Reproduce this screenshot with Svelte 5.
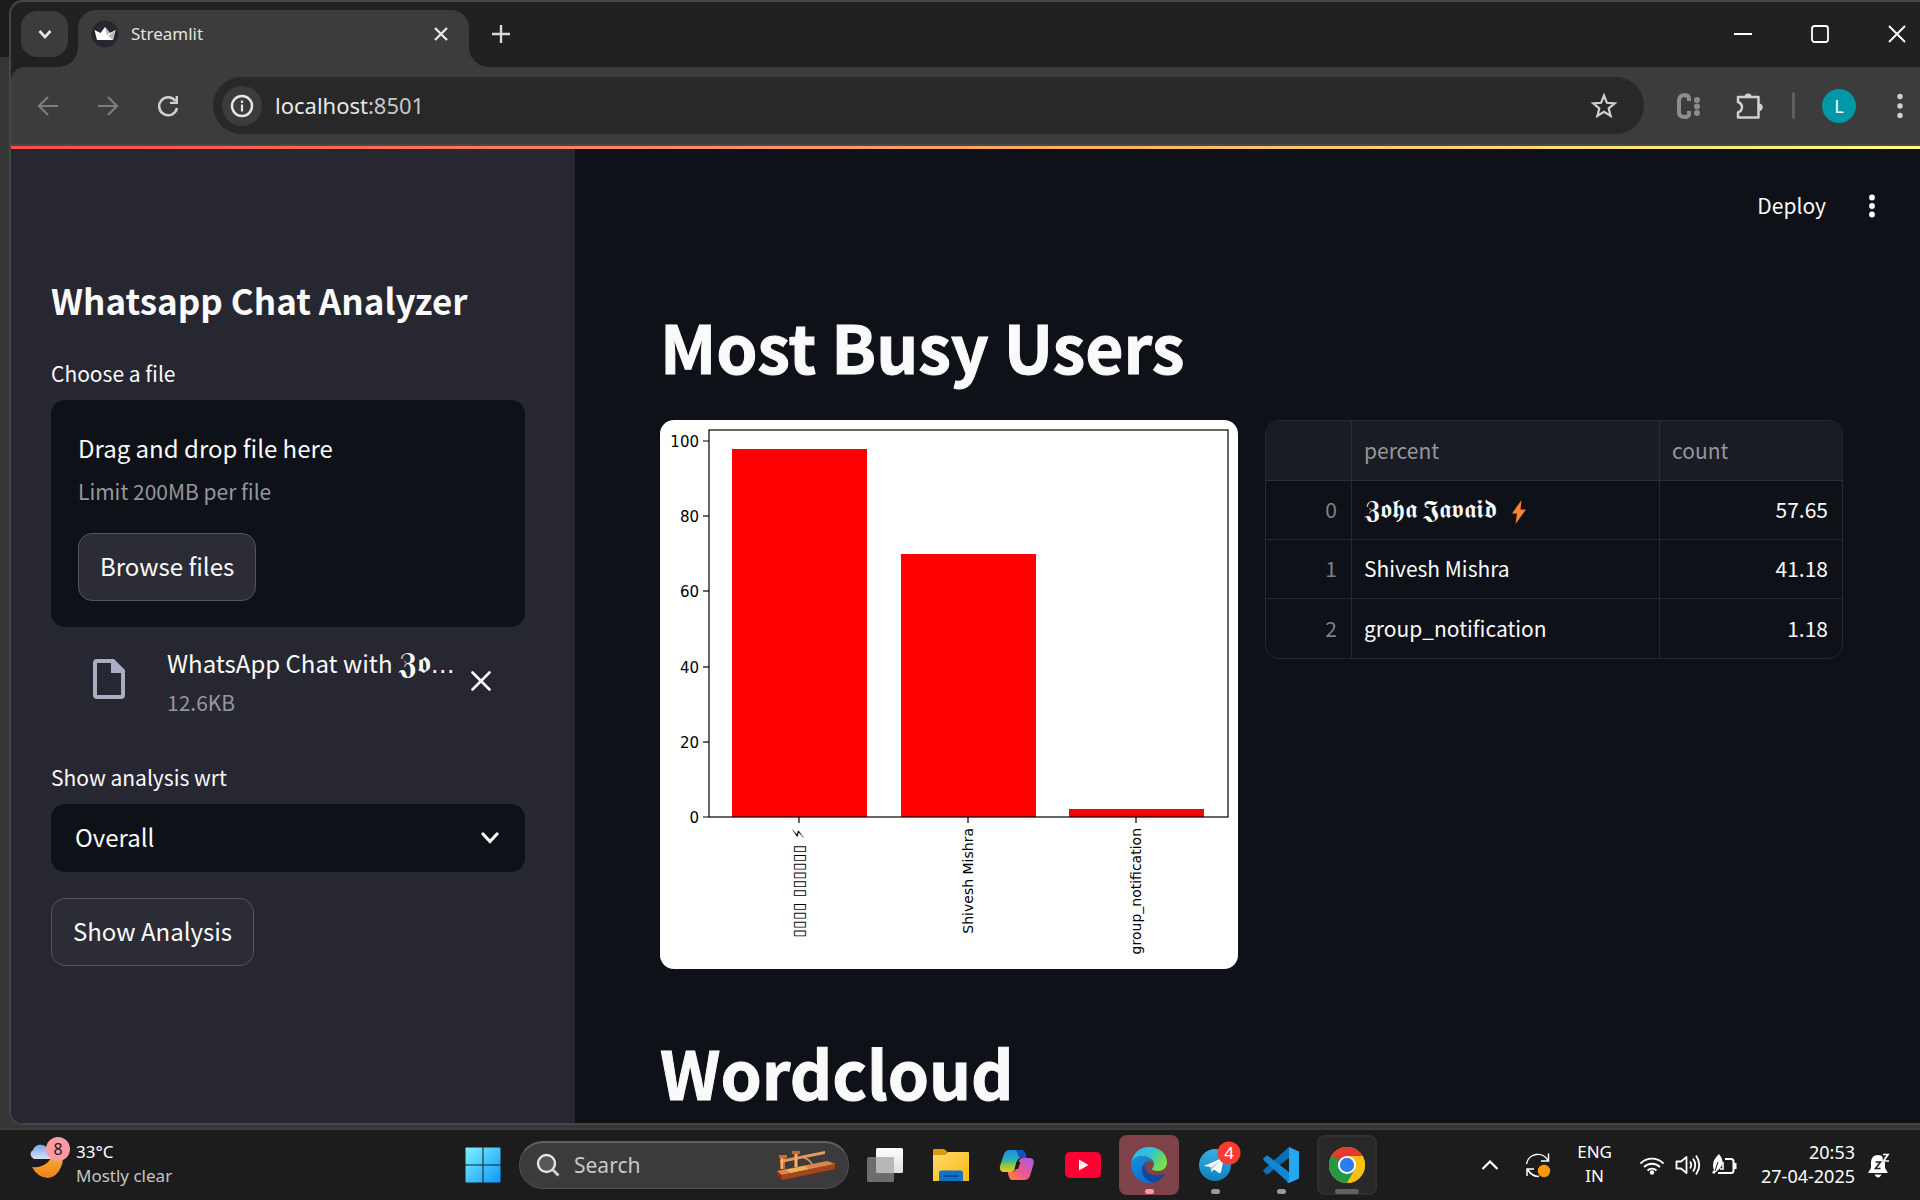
<script>
  const yTicks = [100, 80, 60, 40, 20, 0];
  const bars = [
    { label: '▯▯▯▯ ▯▯▯▯▯▯ ⚡', value: 98 },
    { label: 'Shivesh Mishra', value: 70 },
    { label: 'group_notification', value: 2 }
  ];
  const rows = [
    { name: '𝖅𝖔𝖍𝖆 𝕵𝖆𝖛𝖆𝖎𝖉', bolt: true, count: '57.65' },
    { name: 'Shivesh Mishra', bolt: false, count: '41.18' },
    { name: 'group_notification', bolt: false, count: '1.18' }
  ];
  const plot = { left: 49, right: 568, top: 10, bottom: 397 };
  const unit = 3.76;
  const y = (v) => Math.round(plot.bottom - v * unit);
  const centre = (i) => Math.round(139 + i * 168.5);
  let user = $state('Overall');
</script>

<div class="desktop">
  <div class="window">
    <div class="tabstrip">
      <button class="tabsearch" aria-label="Search tabs">
        <svg width="16" height="16" viewBox="0 0 16 16"><path d="M2.500 5l5.500 6 5.500-6" fill="none" stroke="#e6e6e6" stroke-width="2.600" /></svg>
      </button>
      <div class="tab">
        <svg width="28" height="28" viewBox="0 0 28 28">
          <circle cx="14" cy="14" r="13.500" fill="#262730" />
          <path d="M3.500 10l6 3L14 7l5 6 5.500-3-2.500 10H6z" fill="#fff" />
          <path d="M14 7l5 6-3 2zM24.500 10L22 20l-5-4z" fill="#b9b9bd" />
        </svg>
        <span class="tabtitle">Streamlit</span>
        <button class="plain" aria-label="Close tab">
          <svg width="16" height="16" viewBox="0 0 16 16"><path d="M2 2l12 12M14 2L2 14" stroke="#e6e6e6" stroke-width="2.400" /></svg>
        </button>
      </div>
      <button class="plain newtab" aria-label="New tab">
        <svg width="18" height="18" viewBox="0 0 18 18"><path d="M9 0v18M0 9h18" stroke="#dadada" stroke-width="2.400" /></svg>
      </button>
      <div class="winctl">
        <button class="plain" aria-label="Minimize"><svg width="18" height="18" viewBox="0 0 18 18"><path d="M0 9h18" stroke="#fff" stroke-width="2" /></svg></button>
        <button class="plain" aria-label="Maximize"><svg width="18" height="18" viewBox="0 0 18 18"><rect x="1" y="1" width="16" height="16" rx="2.500" fill="none" stroke="#fff" stroke-width="1.800" /></svg></button>
        <button class="plain" aria-label="Close"><svg width="18" height="18" viewBox="0 0 18 18"><path d="M1 1l16 16M17 1L1 17" stroke="#fff" stroke-width="1.900" /></svg></button>
      </div>
    </div>

    <div class="toolbar">
      <div class="nav">
        <button class="plain" aria-label="Back"><svg width="22" height="22" viewBox="0 0 22 22"><path d="M21 11H2M11 2l-9 9 9 9" fill="none" stroke="#7c7c7c" stroke-width="2.200" /></svg></button>
        <button class="plain" aria-label="Forward"><svg width="22" height="22" viewBox="0 0 22 22"><path d="M1 11h19M11 2l9 9-9 9" fill="none" stroke="#7c7c7c" stroke-width="2.200" /></svg></button>
        <button class="plain" aria-label="Reload"><svg width="22" height="22" viewBox="0 0 22 22"><path d="M18.500 6A9 9 0 1 0 20 13" fill="none" stroke="#d0d0d0" stroke-width="2.500" /><path d="M21 1v8h-8V6.700h5.600V1z" fill="#d0d0d0" /></svg></button>
      </div>
      <div class="omnibox">
        <button class="info" aria-label="Site information">
          <svg width="24" height="24" viewBox="0 0 24 24"><circle cx="12" cy="12" r="10" fill="none" stroke="#e6e6e6" stroke-width="2.400" /><path d="M12 10.500V17.500M12 6.500V9" stroke="#e6e6e6" stroke-width="2.200" /></svg>
        </button>
        <a class="url" href="http://localhost:8501">localhost<span>:8501</span></a>
        <button class="plain" aria-label="Bookmark this tab">
          <svg width="28" height="28" viewBox="0 0 28 28"><path d="M14 3.500l2.900 7.300 7.800.6-6 5 1.900 7.600L14 19.900 7.400 24l1.900-7.600-6-5 7.800-.6z" fill="none" stroke="#d0d0d0" stroke-width="2.200" /></svg>
        </button>
      </div>
      <div class="ext">
        <button class="plain" aria-label="Extension">
          <svg width="26" height="28" viewBox="0 0 26 28"><path d="M14 9V7q0-4-4.500-4T4 8v12q0 5 5.500 5t4.500-4v-2" fill="none" stroke="#8d8d8d" stroke-width="4" /><g fill="#8d8d8d"><circle cx="22" cy="8" r="3" /><circle cx="22" cy="14.500" r="3" /><circle cx="22" cy="21" r="3" /></g></svg>
        </button>
        <button class="plain" aria-label="Extensions">
          <svg width="30" height="30" viewBox="0 0 30 30"><path d="M3 6h20.500v20.500H3v-5q4-1.500 4-5.200T3 11z" fill="none" stroke="#d0d0d0" stroke-width="2.500" stroke-linejoin="round" /><path d="M9.500 6a3.600 3.600 0 0 1 7.200 0zM24 12.500a3.600 3.600 0 0 1 0 7.400z" fill="#d0d0d0" /></svg>
        </button>
        <span class="divider"></span>
        <button class="avatar">L</button>
        <button class="plain" aria-label="Menu"><svg width="6" height="26" viewBox="0 0 6 26"><g fill="#d0d0d0"><circle cx="3" cy="3.500" r="2.700" /><circle cx="3" cy="13" r="2.700" /><circle cx="3" cy="22.500" r="2.700" /></g></svg></button>
      </div>
    </div>
    <div class="rainbow"></div>

    <div class="app">
      <aside class="sidebar">
        <h2>Whatsapp Chat Analyzer</h2>
        <div class="label" id="upload-label">Choose a file</div>
        <section class="dropzone" aria-labelledby="upload-label">
          <div class="body">Drag and drop file here</div>
          <div class="small muted limit">Limit 200MB per file</div>
          <button class="btn">Browse files</button>
        </section>
        <div class="file">
          <svg width="32" height="40" viewBox="0 0 32 40"><path d="M4 0h17l11 11v25a4 4 0 0 1-4 4H4a4 4 0 0 1-4-4V4a4 4 0 0 1 4-4zm0 4v32h24V14H18V4z" fill="#a9aec4" /></svg>
          <div class="filetext">
            <div class="body">WhatsApp Chat with <span class="fraktur">𝖅𝖔</span><span class="dots">…</span></div>
            <div class="small muted">12.6KB</div>
          </div>
          <button class="plain" aria-label="Remove file"><svg width="20" height="20" viewBox="0 0 20 20"><path d="M1.500 1.500l17 17M18.500 1.500l-17 17" stroke="#fafafa" stroke-width="2.600" stroke-linecap="round" /></svg></button>
        </div>
        <label class="label" for="user">Show analysis wrt</label>
        <div class="selectbox">
          <select id="user" bind:value={user}>
            <option>Overall</option>
            <option>Shivesh Mishra</option>
            <option>group_notification</option>
          </select>
          <svg width="18" height="12" viewBox="0 0 18 12"><path d="M2 2l7 7.500L16 2" fill="none" stroke="#fafafa" stroke-width="3.200" stroke-linecap="round" /></svg>
        </div>
        <button class="btn">Show Analysis</button>
      </aside>

      <main>
        <header>
          <button class="plain deploy">Deploy</button>
          <button class="plain" aria-label="App menu"><svg width="6" height="24" viewBox="0 0 6 24"><g fill="#fff"><circle cx="3" cy="3.500" r="2.900" /><circle cx="3" cy="12" r="2.900" /><circle cx="3" cy="20.500" r="2.900" /></g></svg></button>
        </header>
        <h1>Most Busy Users</h1>
        <div class="columns">
          <svg class="chart" viewBox="0 0 578 549" role="img" aria-label="Bar chart of messages per user">
            {#each bars as bar, i}
              <rect x={centre(i) - 67} y={y(bar.value)} width="135" height={plot.bottom - y(bar.value)} fill="#f00" />
              <path d="M{centre(i)} {plot.bottom}v6" />
              <text class={i === 0 ? 'xlabel tofu' : 'xlabel'} transform="translate({centre(i) + 5} {plot.bottom + 11}) rotate(-90)" text-anchor="end">{bar.label}</text>
            {/each}
            {#each yTicks as tick}
              <path d="M{plot.left} {y(tick)}h-6" />
              <text x={plot.left - 10} y={y(tick) + 6} text-anchor="end">{tick}</text>
            {/each}
            <rect x={plot.left} y={plot.top} width={plot.right - plot.left} height={plot.bottom - plot.top} fill="none" stroke="#000" stroke-width="1.200" />
          </svg>
          <div class="tablewrap">
            <table>
              <colgroup><col class="c-index" /><col /><col class="c-count" /></colgroup>
              <thead>
                <tr><th aria-label="Index"></th><th>percent</th><th>count</th></tr>
              </thead>
              <tbody>
                {#each rows as row, i}
                  <tr>
                    <td class="index">{i}</td>
                    <td>
                      {#if row.bolt}
                        <span class="fraktur">{row.name}</span>
                        <svg class="bolt" width="14" height="24" viewBox="0 0 14 24"><path d="M9.500 0L0 13.500h5L3.500 24 14 9.500H8.500z" fill="#ff822d" /></svg>
                      {:else}{row.name}{/if}
                    </td>
                    <td class="num">{row.count}</td>
                  </tr>
                {/each}
              </tbody>
            </table>
          </div>
        </div>
        <h1 class="next">Wordcloud</h1>
      </main>
    </div>
  </div>

  <div class="taskbar">
    <button class="weather">
      <svg width="44" height="58" viewBox="0 0 44 58">
        <defs>
          <linearGradient id="moon" x1="0" y1="0" x2="0" y2="1"><stop offset="0" stop-color="#f5c033" /><stop offset="1" stop-color="#f0801e" /></linearGradient>
          <linearGradient id="cloud" x1="0" y1="0" x2="0" y2="1"><stop offset="0" stop-color="#7aa5ee" /><stop offset="1" stop-color="#d5e1f8" /></linearGradient>
        </defs>
        <path d="M32 14q5 9 1 17-4 10-13 11-10 0-16-11 9 1 15-4t6-14z" fill="url(#moon)" />
        <path d="M6 23a5 5 0 0 1-1-9 8 8 0 0 1 14-2 6 6 0 0 1 4 11z" fill="url(#cloud)" />
        <circle cx="30" cy="13" r="12" fill="#ff99a4" />
        <text x="30" y="19" text-anchor="middle" class="badge8">8</text>
      </svg>
      <span class="wtext"><span>33°C</span><span class="dim">Mostly clear</span></span>
    </button>

    <div class="pins">
      <button class="pin" aria-label="Start">
        <svg width="36" height="36" viewBox="0 0 36 36">
          <defs><linearGradient id="win" x1="0" y1="0" x2="1" y2="1"><stop offset="0" stop-color="#7df4fd" /><stop offset="1" stop-color="#0c96fb" /></linearGradient></defs>
          <path d="M1 .5h16.500v17H.5V1zM18.500.5H35l.5.5v16.500h-17zM.5 18.500h17v17H1l-.5-.5zM18.500 18.500h17V35l-.5.5H18.500z" fill="url(#win)" />
        </svg>
      </button>
      <label class="search">
        <svg width="24" height="24" viewBox="0 0 24 24"><circle cx="10.500" cy="10.500" r="8.500" fill="#575757" stroke="#e4e6e8" stroke-width="2.400" /><path d="M16.500 16.500l6 6" stroke="#cfd4d8" stroke-width="2.800" /></svg>
        <input type="text" placeholder="Search" aria-label="Search" />
        <svg width="60" height="32" viewBox="0 0 60 32">
          <path d="M1 22l53-10 5 2v6L6 31l-5-5z" fill="#8f3413" />
          <path d="M1 22l50-10 8 3L6 26z" fill="#d9874f" />
          <path d="M10 21l18-4 5 3-18 4z" fill="#e6b655" />
          <path d="M6 31v-5l53-11v5z" fill="#a4451a" />
          <path d="M3 6h8v3H9v11H4V9H3zM16 2h8v3h-2v13h-4V5h-2z" fill="#c96b30" />
          <path d="M4 11l45-9v3L24 10l-20 4z" fill="#e39a5e" />
          <path d="M28 9q5 1 8 6" fill="none" stroke="#d99a63" stroke-width="1.500" />
          <path d="M19 5h2v13h-2zM5 9h2v11H5z" fill="#efb27b" />
        </svg>
      </label>
      <button class="pin" aria-label="Task view">
        <svg width="36" height="34" viewBox="0 0 36 34"><defs><linearGradient id="tv" x1="0" y1="0" x2="0" y2="1"><stop offset="0" stop-color="#fff" /><stop offset="1" stop-color="#dedede" /></linearGradient></defs><rect x="9" y="0" width="27" height="25" rx="1.500" fill="url(#tv)" /><rect x="0" y="9" width="27" height="25" rx="1.500" fill="#6d6d6d" /><path d="M9 9h18v16H10.500A1.500 1.500 0 0 1 9 23.500z" fill="#b7b7b7" /></svg>
      </button>
      <button class="pin" aria-label="File Explorer">
        <svg width="36" height="34" viewBox="0 0 36 34"><defs><linearGradient id="fol" x1="0" y1="0" x2="1" y2="1"><stop offset="0" stop-color="#ffdb70" /><stop offset="1" stop-color="#fbb90d" /></linearGradient></defs><path d="M0 2q0-1 1-1h9q2 0 3 1.500L15 5v4H0z" fill="#dd9a08" /><path d="M0 7h11q2 0 3-1.500L15 4h20q1 0 1 1v28H0z" fill="url(#fol)" /><path d="M6 33V25q0-2.500 2.500-2.500h19Q30 22.500 30 25v8z" fill="#1173c7" /><path d="M10.500 28h15" stroke="#0a4a8a" stroke-width="1.800" /></svg>
      </button>
      <button class="pin" aria-label="Copilot">
        <svg width="36" height="34" viewBox="0 0 36 34">
          <defs>
            <linearGradient id="cpa" x1="0" y1="0" x2="0" y2="1"><stop offset="0" stop-color="#1a8fe8" /><stop offset=".45" stop-color="#2bb0b5" /><stop offset=".7" stop-color="#92c83e" /><stop offset="1" stop-color="#f2c71c" /></linearGradient>
            <linearGradient id="cpb" x1="0" y1="1" x2="1" y2="0"><stop offset="0" stop-color="#ff8a4a" /><stop offset=".45" stop-color="#f0568c" /><stop offset="1" stop-color="#a45bf0" /></linearGradient>
          </defs>
          <path d="M11 2h11q3 0 4 3l1.500 5H22q-3 0-4 3l-2 8q-1 3-4 3H5q-5 0-4-6L5 6q1.500-4 6-4z" fill="url(#cpa)" />
          <path d="M17 2h5q3 0 4 3l1.500 5H22q-3-1-3-4z" fill="#1251c4" />
          <path d="M25 32H14q-3 0-4-3l-1-5h4q3 0 4-3l3-8q1-3 4-3h6q6 0 4.500 6L31 28q-1.500 4-6 4z" fill="url(#cpb)" />
          <path d="M19 32h-5q-3 0-4-3l-1-5h4q3 1 4 4z" fill="#ff7553" />
          <path d="M17.500 14h4l-2.500 7h-3.500z" fill="#1c1c1c" />
        </svg>
      </button>
      <button class="pin" aria-label="YouTube">
        <svg width="36" height="26" viewBox="0 0 36 26"><rect width="36" height="26" rx="5" fill="#ff0033" /><path d="M14 7.500v11L23.500 13z" fill="#fff" /></svg>
      </button>
      <button class="pin alert" aria-label="Edge">
        <svg width="36" height="36" viewBox="0 0 36 36">
          <defs>
            <linearGradient id="eda" x1="0" y1="0" x2="1" y2=".5"><stop offset="0" stop-color="#36b8f2" /><stop offset=".5" stop-color="#2dc3d8" /><stop offset="1" stop-color="#74e04a" /></linearGradient>
            <linearGradient id="edb" x1="0" y1="0" x2=".5" y2="1"><stop offset="0" stop-color="#1490d8" /><stop offset="1" stop-color="#0a70d4" /></linearGradient>
          </defs>
          <path d="M0 17C1 7 8 0 18 0c11 0 18 7 18 15 0 6-4 9-9 9-4 0-6-1-6-2s2-2 2-5c0-4-5-8-12-8C5 9 1 13 0 17z" fill="url(#eda)" />
          <path d="M0 18c0-6 5-9 11-9s11 4 11 7c0 0-1-2-4-2-4 0-7 4-7 9 0 7 6 12 12 12q-2 1-5 1C8 36 0 28 0 18z" fill="url(#edb)" />
          <path d="M14 16q-3 3-3 7c0 7 6 12 11 12.500C27 35 31 32 33.500 28c.5-1-.5-1.500-1.500-1-6 3-16 1-18-6q-.5-3 0-5z" fill="#114a9c" />
        </svg>
        <span class="mark"></span>
      </button>
      <button class="pin" aria-label="Telegram">
        <svg width="52" height="56" viewBox="-2 -6 52 56">
          <defs><linearGradient id="tg" x1="0" y1="0" x2="0" y2="1"><stop offset="0" stop-color="#38aee4" /><stop offset="1" stop-color="#0f80bf" /></linearGradient></defs>
          <circle cx="24" cy="22" r="16" fill="url(#tg)" />
          <path d="M13 23l18-8q2-1 1.500 1.500L30 29q-.5 2-2 1l-5-3.500-2.500 2.500-1-5z" fill="#fff" /><path d="M19.500 24.500l9-6-7 7-1 3.500z" fill="#a9cbe0" />
          <circle cx="38" cy="10" r="11.500" fill="#f73c30" />
          <text x="38" y="16" text-anchor="middle" class="badge4">4</text>
        </svg>
        <span class="mark"></span>
      </button>
      <button class="pin" aria-label="Visual Studio Code">
        <svg width="36" height="36" viewBox="0 0 36 36"><path d="M26 0v11L5 27q-1 .8-2 0L.7 24.700q-1-1 0-2z" fill="#0b6fb5" /><path d="M26 36V25L5 9q-1-.8-2 0L.7 11.300q-1 1 0 2z" fill="#1186d2" /><path d="M26 0l10 4.500v27L26 36q-1.500 0-2-1.500L26 34z" fill="#27a7f2" /></svg>
        <span class="mark"></span>
      </button>
      <button class="pin active" aria-label="Chrome">
        <svg width="36" height="36" viewBox="0 0 36 36"><circle cx="18" cy="18" r="18" fill="#fbbf12" /><path d="M2.400 9A18 18 0 0 1 33.600 9H18L10 22.500z" fill="#e33b2e" /><path d="M2.400 9A18 18 0 0 0 18 36l8-13.500-16 0z" fill="#269547" /><path d="M2.400 9L10.200 22.500 14 14z" fill="#269547" /><path d="M18 9h15.600A18 18 0 0 1 18 36l7.800-13.500z" fill="#fbbf12" /><circle cx="18" cy="18" r="9" fill="#fff" /><circle cx="18" cy="18" r="7.200" fill="#2f7cf0" /></svg>
        <span class="mark"></span>
      </button>
    </div>

    <div class="tray">
      <button class="plain" aria-label="Show hidden icons"><svg width="18" height="12" viewBox="0 0 18 12"><path d="M1.500 10L9 2.500l7.500 7.500" fill="none" stroke="#fff" stroke-width="2.200" /></svg></button>
      <button class="plain sync" aria-label="Updates"><svg width="26" height="26" viewBox="0 0 26 26"><path d="M1.500 12A11.500 11.500 0 0 1 23 8.500M23.500 1.500V9H16M9 17H2v7M3 18q4 6.500 11 6.500" fill="none" stroke="#fff" stroke-width="1.500" /><circle cx="19" cy="19" r="6.200" fill="#ff9808" /></svg></button>
      <button class="plain lang"><span>ENG</span><span>IN</span></button>
      <button class="plain status" aria-label="Network, volume and battery">
        <svg width="26" height="20" viewBox="0 0 26 20"><g fill="none" stroke="#fff" stroke-width="1.900"><path d="M1.500 8.500a16 16 0 0 1 23 0M5 12a11.300 11.300 0 0 1 16 0M8.500 15.500a6.400 6.400 0 0 1 9 0" /></g><circle cx="13" cy="17.500" r="2.200" fill="#fff" /></svg>
        <svg width="26" height="22" viewBox="0 0 26 22"><g fill="none" stroke="#fff" stroke-width="1.800"><path d="M1.500 7.500H6L11.500 3v16L6 14.500H1.500z" stroke-linejoin="round" /><path d="M15 7.500q2.500 3.500 0 7M18 4.500q4.500 6.500 0 13M21 1.500q6.500 9.500 0 19" /></g></svg>
        <svg width="26" height="22" viewBox="0 0 26 22"><path d="M14 5h6q2.500 0 2.500 2.500v9Q22.500 19 20 19H7" fill="none" stroke="#fff" stroke-width="2" /><path d="M23 9h2.500v6H23zM8 0q4 5 3.500 9T7 16l-4 4-2-1.500L3 16Q-.5 8 8 0z" fill="#fff" /><path d="M7 8L4 17" stroke="#1c1c1c" /><path d="M12 8v7H9" fill="none" stroke="#fff" stroke-width="1.600" /></svg>
      </button>
      <button class="plain clock"><span>20:53</span><span>27-04-2025</span></button>
      <button class="plain" aria-label="Notifications"><svg width="22" height="26" viewBox="0 0 22 26"><path d="M10 3q6.500 0 7 7v6l2.500 4v1H.5v-1L3 16v-6q.5-7 7-7zM6.500 22.500h7Q12 25.500 10 25.500t-3.500-3z" fill="#fff" /><path d="M7.500 10h5l-5 6.500h5" fill="none" stroke="#1c1c1c" stroke-width="1.600" /><path d="M14 1h8v9h-7z" fill="#1c1c1c" /><path d="M15 2.500h5L15.500 9H21" fill="none" stroke="#fff" stroke-width="1.700" /></svg></button>
    </div>
  </div>
</div>

<style>
  :global(body) { background: linear-gradient(#1c1c1c 57px, #363636 57px); overflow: hidden; }
  .desktop { height: 100vh; display: flex; flex-direction: column; font-family: 'Noto Sans', 'Open Sans', sans-serif; color: #fff; box-sizing: border-box; }
  .desktop :global(*) { box-sizing: border-box; }
  button { font: inherit; color: inherit; border: 0; background: none; padding: 0; display: flex; align-items: center; justify-content: center; flex: none; }
  svg { display: block; flex: none; }

  .window { flex: 1; min-height: 0; margin: 0 0 3px 9px; display: flex; flex-direction: column; border: 2px solid #454747; border-right: 0; border-radius: 14px 0 0 14px; overflow: hidden; background: #202221; }
  .tabstrip { flex: none; height: 65px; display: flex; padding-left: 10px; }
  .tabsearch { width: 47px; height: 46px; margin: 9px 10px 0 0; border-radius: 16px; background: #3c3c3c; }
  .tab { position: relative; width: 391px; margin-top: 8px; padding: 0 20px 10px 13px; border-radius: 18px 18px 0 0; background: #3c3c3c; display: flex; align-items: center; }
  .tab::before, .tab::after { content: ''; position: absolute; bottom: 0; width: 20px; height: 20px; }
  .tab::before { left: -20px; background: radial-gradient(circle at 0 0, transparent 20px, #3c3c3c 20px); }
  .tab::after { right: -20px; background: radial-gradient(circle at 100% 0, transparent 20px, #3c3c3c 20px); }
  .tabtitle { flex: 1; margin-left: 12px; font-size: 17px; color: #e3e3e3; }
  .newtab { width: 64px; height: 64px; }
  .winctl { margin-left: auto; padding-right: 14px; height: 64px; display: flex; align-items: center; gap: 59px; }

  .toolbar { flex: none; height: 79px; background: #3c3c3c; border-radius: 14px 0 0 0; border-bottom: 2px solid #464846; display: flex; align-items: center; }
  .nav { width: 202px; padding-left: 26px; display: flex; gap: 38px; }
  .omnibox { flex: 1; height: 57px; padding: 0 26px 0 9px; border-radius: 29px; background: #282828; display: flex; align-items: center; }
  .info { width: 40px; height: 40px; border-radius: 50%; background: #3c3c3c; }
  .url { flex: 1; margin-left: 13px; padding-bottom: 2px; font-size: 22px; color: #e8e8e8; text-decoration: none; }
  .url span { color: #c7c7c7; }
  .ext { display: flex; align-items: center; padding: 0 17px 0 31px; }
  .ext .plain:first-child { margin-right: 34px; }
  .divider { width: 3px; height: 27px; margin: 0 27px; border-radius: 2px; background: #606060; }
  .avatar { width: 34px; height: 34px; margin-right: 41px; border-radius: 50%; background: #0097a7; font-size: 18px; }
  .rainbow { flex: none; height: 3px; background: linear-gradient(90deg, #ff4b4b, #fffd80); }

  .app { flex: 1; min-height: 0; display: flex; background: #0e1117; font-family: 'Noto Sans CJK SC', sans-serif; color: #fafafa; font-size: 24px; overflow: hidden; }
  .sidebar { flex: none; width: 564px; padding: 129px 50px 0 40px; background: #262730; }
  h2 { margin: 0 0 35px; font-size: 35px; line-height: 44px; font-weight: 700; }
  .label { display: block; margin-bottom: 11px; font-size: 21px; line-height: 32px; }
  .body { line-height: 40px; white-space: nowrap; }
  .small { font-size: 21px; line-height: 32px; }
  .muted { color: #96979b; }
  .dropzone { padding: 28px 27px 26px 27px; margin-bottom: 16px; border-radius: 14px; background: #0e1117; }
  .limit { margin: 7px 0 26px; }
  .btn { height: 68px; padding: 0 21px 3px; border: 1px solid #53545b; border-radius: 14px; background: #2b2c36; }
  .file { display: flex; align-items: center; padding: 0 34px 0 42px; margin-bottom: 43px; }
  .file > svg { margin-bottom: 4px; }
  .filetext { flex: 1; min-width: 0; margin-left: 42px; }
  .filetext .small { margin-top: 4px; line-height: 31px; }
  .fraktur { font-size: 26px; line-height: 1px; }
  .body .fraktur { font-size: 30px; }
  .dots { font-family: 'DejaVu Sans', sans-serif; line-height: 1px; }
  .selectbox { display: grid; align-items: center; margin-bottom: 26px; }
  .selectbox > * { grid-area: 1 / 1; }
  .selectbox svg { justify-self: end; margin-right: 26px; pointer-events: none; }
  select { appearance: none; width: 100%; height: 68px; padding: 0 24px 4px; border: 0; border-radius: 14px; background: #0e1117; color: inherit; font: inherit; }

  main { flex: 1; min-width: 0; padding: 0 77px 0 85px; }
  header { height: 114px; margin-right: -32px; display: flex; align-items: center; justify-content: flex-end; gap: 43px; }
  .deploy { font-size: 21px; padding-bottom: 2px; }
  h1 { margin: 42px 0 35px; font-size: 66px; line-height: 80px; font-weight: 700; -webkit-text-stroke: 1px #fafafa; }
  h1.next { margin: 62px 0 0; }
  .columns { display: grid; grid-template-columns: 1fr 1fr; gap: 27px; align-items: start; }
  .chart { width: 100%; height: auto; border-radius: 14px; background: #fff; font: 15px 'DejaVu Sans', sans-serif; }
  .chart path { stroke: #000; stroke-width: 1.2; }
  .xlabel { font-size: 14px; }
  .xlabel.tofu { font-size: 16px; }
  .tablewrap { border: 1px solid #26282e; border-radius: 14px; overflow: hidden; }
  table { width: 100%; table-layout: fixed; border-collapse: separate; border-spacing: 0; font-size: 21px; line-height: 32px; }
  .c-index { width: 85px; }
  .c-count { width: 183px; }
  th, td { height: 59px; padding: 0 14px 2px 12px; text-align: left; font-weight: 400; border-left: 1px solid #26282e; border-bottom: 1px solid #26282e; }
  th { height: 60px; background: #1a1c24; color: #96979b; border-color: #2c2f36; }
  th:first-child, td:first-child { border-left: 0; }
  tbody tr:last-child td { border-bottom: 0; }
  .index { text-align: right; color: #808288; }
  .num { text-align: right; }
  .bolt { display: inline-block; vertical-align: middle; margin-left: 10px; }

  .taskbar { flex: none; height: 72px; border-top: 2px solid #3c3c3c; background: #1c1c1c; display: flex; align-items: center; }
  .weather { width: 453px; padding-left: 28px; gap: 4px; justify-content: flex-start; text-align: left; font-size: 17px; line-height: 24px; }
  .wtext { display: flex; flex-direction: column; padding-bottom: 2px; }
  .dim { color: #c4c4c4; }
  .badge8 { font-size: 16px; fill: #1a1a1a; }
  .badge4 { font-size: 17px; fill: #fff; }
  .pins { display: flex; align-items: center; gap: 6px; }
  .pin { position: relative; width: 60px; height: 60px; border-radius: 8px; }
  .search { width: 330px; height: 48px; padding: 0 12px 2px 16px; display: flex; align-items: center; border: 1px solid #505050; border-top: 2px solid #606060; border-radius: 24px; background: #3b3b3b; }
  .search input { flex: 1; min-width: 0; margin-left: 14px; border: 0; padding: 0; background: none; color: #fff; font: 21px 'Noto Sans', sans-serif; }
  .search input::placeholder { color: #c9c9c9; opacity: 1; }
  .alert { background: #7f4248; }
  .active { background: #282828; border: 2px solid #303030; }
  .mark { position: absolute; bottom: 1px; width: 9px; height: 5px; border-radius: 3px; background: #9a9a9a; }
  .alert .mark { background: #ff99a4; }
  .active .mark { bottom: -1px; width: 24px; background: #606060; }
  .tray { margin-left: auto; padding-right: 30px; display: flex; align-items: center; font-size: 17px; line-height: 24px; }
  .sync { margin: 0 26px; }
  .lang, .clock { flex-direction: column; padding-bottom: 2px; }
  .lang { margin-right: 27px; }
  .status { gap: 10px; margin-right: 20px; }
  .clock { width: 98px; align-items: flex-end; margin-right: 13px; font-size: 18px; }
</style>
